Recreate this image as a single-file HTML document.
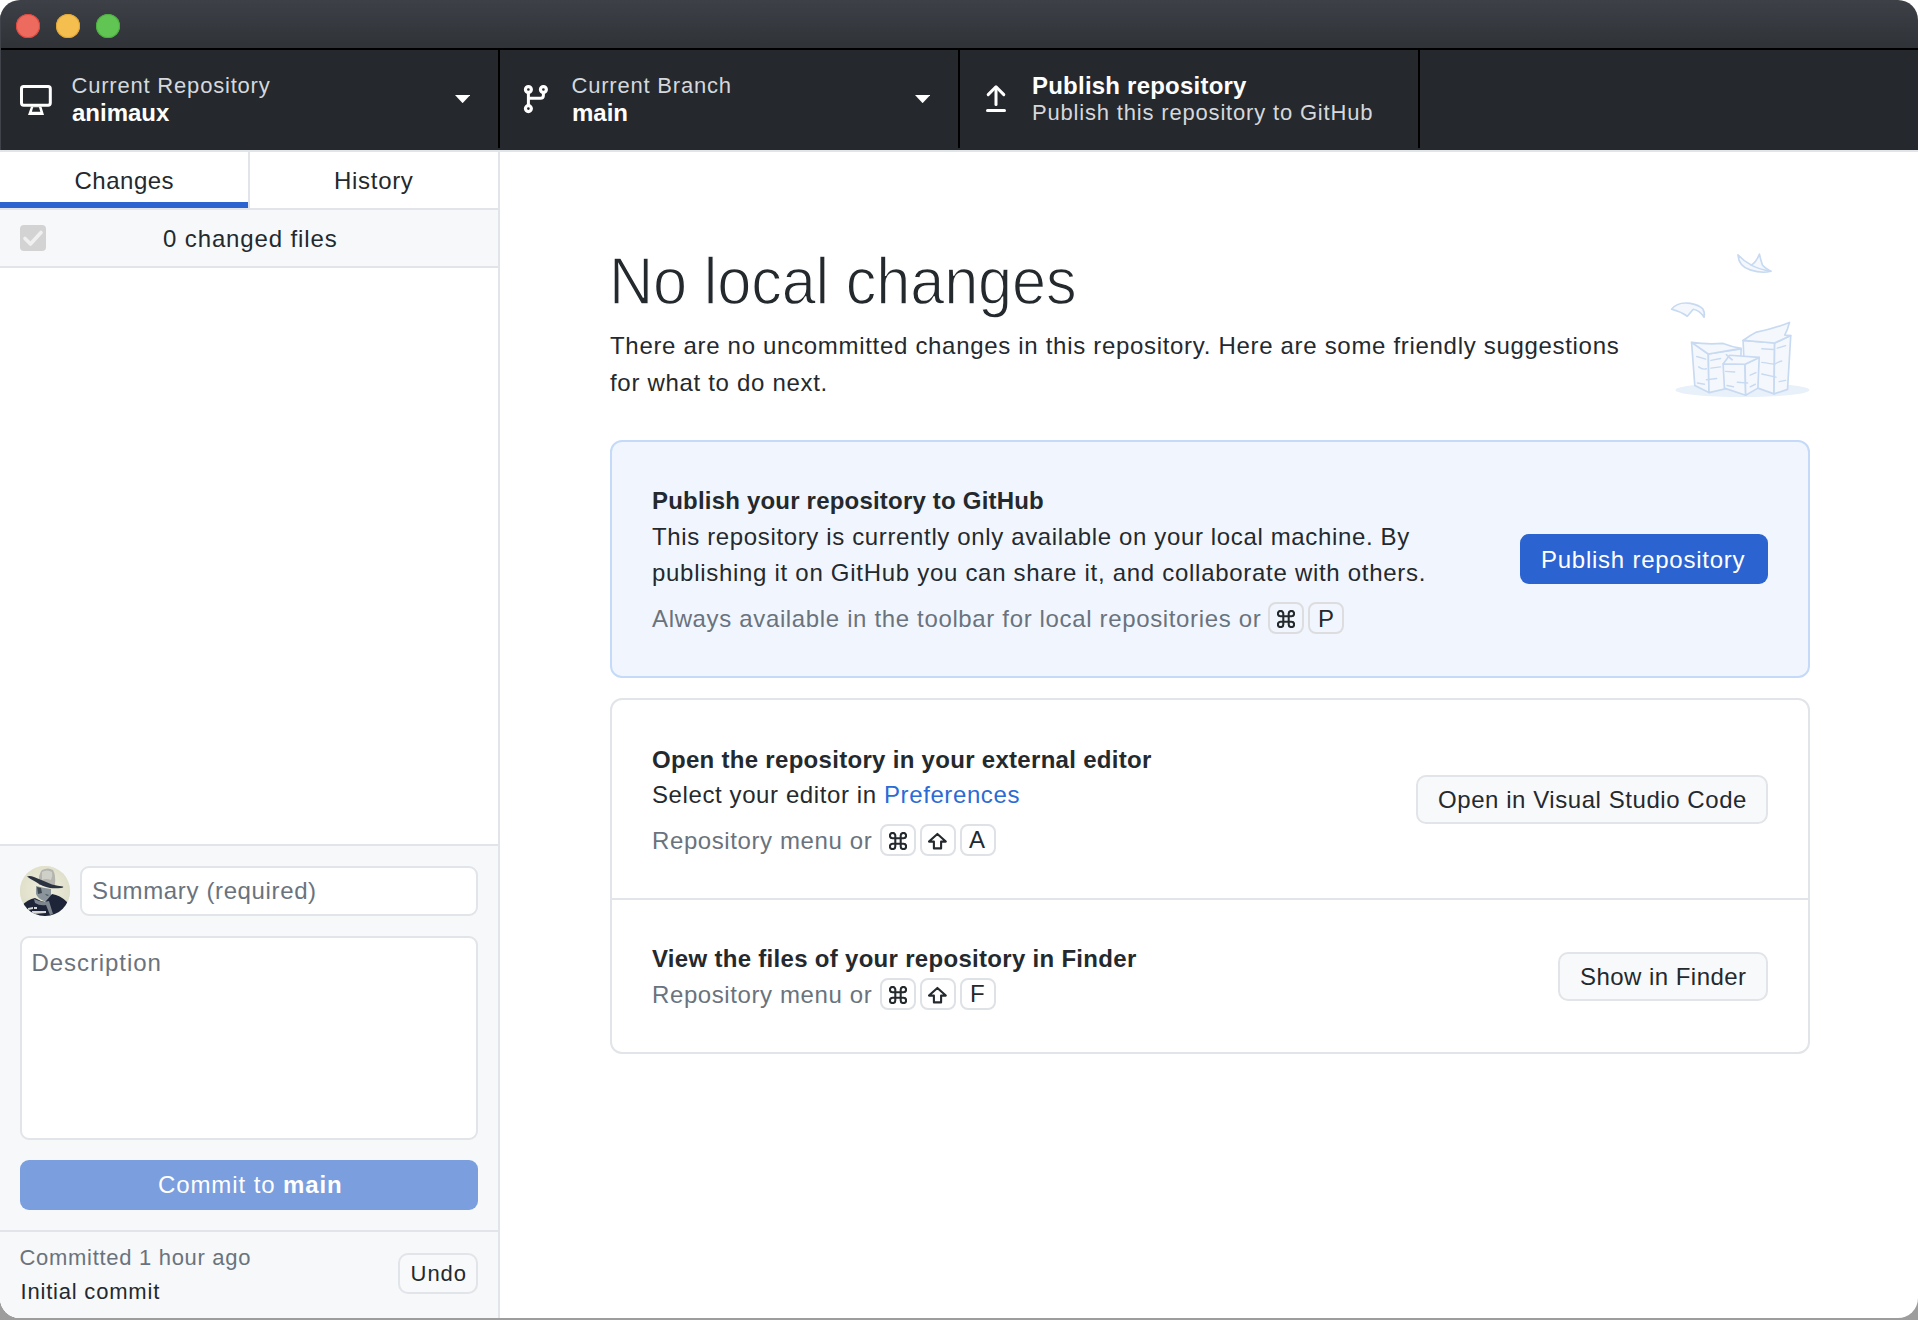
<!DOCTYPE html>
<html>
<head>
<meta charset="utf-8">
<style>
html,body{margin:0;padding:0;}
body{width:1918px;height:1320px;overflow:hidden;position:relative;background:linear-gradient(#fff 0,#fff 1250px,#9d9d9d 1250px);font-family:"Liberation Sans",sans-serif;}
#win{position:absolute;left:0;top:0;width:1918px;height:1318px;border-radius:20px;overflow:hidden;background:#fff;}
.a{position:absolute;}
.t{position:absolute;line-height:1;white-space:nowrap;}
#titlebar{left:0;top:0;width:1918px;height:48px;background:linear-gradient(#3d4046,#2f3237);}
.light{position:absolute;top:14px;width:24px;height:24px;border-radius:50%;}
#blk{left:0;top:48px;width:1918px;height:2px;background:#000;}
#toolbar{left:0;top:50px;width:1918px;height:100px;background:#25282d;}
.vdiv{position:absolute;top:0;width:2px;height:98px;background:#000;}
.lbl{color:#d5d8dc;font-size:22px;letter-spacing:0.7px;}
.val{color:#fff;font-size:24px;font-weight:bold;}
.hline{position:absolute;height:2px;background:#e1e4e8;}
#sidebar{left:0;top:152px;width:498px;height:1166px;background:#fff;}
.gray{color:#6a737d;}
.dark{color:#24292e;}
.f24{font-size:24px;letter-spacing:0.6px;}
.card{position:absolute;box-sizing:border-box;border-radius:12px;}
.btn{position:absolute;box-sizing:border-box;border:2px solid #e1e4e8;background:#f8f9fa;border-radius:10px;}
.kbd{position:absolute;box-sizing:border-box;width:36px;height:32px;border:2px solid #dee1e5;border-radius:8px;}
</style>
</head>
<body>
<div id="win">
  <div id="titlebar" class="a">
    <div class="light" style="left:16px;background:#ed6a5e;box-shadow:inset 0 0 0 1px #e0473d;"></div>
    <div class="light" style="left:56px;background:#f4bf4f;box-shadow:inset 0 0 0 1px #e0a535;"></div>
    <div class="light" style="left:96px;background:#61c554;box-shadow:inset 0 0 0 1px #4cae3e;"></div>
  </div>
  <div id="blk" class="a"></div>
  <div id="toolbar" class="a">
    <!-- section 1 -->
    <svg class="a" style="left:20px;top:35px" width="33" height="32" viewBox="0 0 33 32">
      <rect x="1.5" y="1.5" width="28.8" height="18.8" rx="2.2" fill="none" stroke="#fff" stroke-width="3"/>
      <path fill="#fff" fill-rule="evenodd" d="M11 21.5 L21.4 21.5 L24 30 L8 30 Z M13.2 22.3 L19 22.3 L20.3 26.8 L11.9 26.8 Z"/>
    </svg>
    <div class="t lbl" style="left:71.5px;top:25px;letter-spacing:0.8px;">Current Repository</div>
    <div class="t val" style="left:72px;top:50.5px;">animaux</div>
    <svg class="a" style="left:454.5px;top:44.6px" width="15.2" height="8.2" viewBox="0 0 16 9" preserveAspectRatio="none"><path d="M0 0 L16 0 L8 9 Z" fill="#fff"/></svg>
    <div class="vdiv" style="left:498px"></div>
    <!-- section 2 -->
    <svg class="a" style="left:522px;top:34px" width="28" height="32" viewBox="0 0 28 32">
      <g fill="none" stroke="#fff" stroke-width="3">
        <circle cx="6.4" cy="5.5" r="2.95" stroke-width="3.2"/>
        <circle cx="21.4" cy="5.5" r="2.95" stroke-width="3.2"/>
        <circle cx="6.4" cy="24.6" r="2.95" stroke-width="3.2"/>
        <path d="M6.4 8.5 V21.6"/>
        <path d="M21.4 8.5 V11.2 Q21.4 14.2 18.4 14.2 H6.4"/>
      </g>
    </svg>
    <div class="t lbl" style="left:571.5px;top:25px;letter-spacing:0.8px;">Current Branch</div>
    <div class="t val" style="left:572px;top:50.5px;">main</div>
    <svg class="a" style="left:914.5px;top:44.6px" width="15.2" height="8.2" viewBox="0 0 16 9" preserveAspectRatio="none"><path d="M0 0 L16 0 L8 9 Z" fill="#fff"/></svg>
    <div class="vdiv" style="left:958px"></div>
    <!-- section 3 -->
    <svg class="a" style="left:984px;top:34px" width="24" height="30" viewBox="0 0 24 30">
      <g fill="none" stroke="#fff" stroke-width="3" stroke-linecap="round" stroke-linejoin="round">
        <path d="M12 3.5 V20.5"/>
        <path d="M4.2 10.6 L12 2.8 L19.8 10.6"/>
        <path d="M3.5 26.5 H20.5"/>
      </g>
    </svg>
    <div class="t val" style="left:1032px;top:24.4px;letter-spacing:0.22px;">Publish repository</div>
    <div class="t lbl" style="left:1032px;top:51.9px;letter-spacing:0.82px;">Publish this repository to GitHub</div>
    <div class="vdiv" style="left:1418px"></div>
  </div>
  <div class="hline" style="left:0;top:150px;width:1918px;"></div>
  <div class="a" style="left:0;top:14px;width:1px;height:136px;background:#40434a;"></div>

  <!-- SIDEBAR -->
  <div id="sidebar" class="a">
    <!-- tabs (y 152-208) -->
    <div class="t dark f24" style="left:74.5px;top:16.7px;letter-spacing:0.5px;">Changes</div>
    <div class="t dark f24" style="left:334px;top:16.7px;letter-spacing:0.7px;">History</div>
    <div class="a" style="left:248px;top:0;width:2px;height:56px;background:#e1e4e8;"></div>
    <div class="a" style="left:0;top:50px;width:248px;height:6px;background:#2b64d0;"></div>
    <div class="hline" style="left:0;top:56px;width:498px;"></div>
    <!-- changed files row (210-266) -->
    <div class="a" style="left:0;top:58px;width:498px;height:56px;background:#f6f8fa;"></div>
    <svg class="a" style="left:20px;top:73px" width="26" height="26" viewBox="0 0 26 26">
      <rect x="0" y="0" width="26" height="26" rx="4" fill="#d3d3d3"/>
      <path d="M5 13.5 L10.5 19 L21 7.5" fill="none" stroke="#f0f0f0" stroke-width="3.6" stroke-linecap="round" stroke-linejoin="round"/>
    </svg>
    <div class="t dark f24" style="left:163px;top:75px;letter-spacing:0.88px;">0 changed files</div>
    <div class="hline" style="left:0;top:114px;width:498px;"></div>
    <!-- commit area (846-1230) -->
    <div class="hline" style="left:0;top:692px;width:498px;"></div>
    <div class="a" style="left:0;top:694px;width:498px;height:624px;background:#f6f8fa;"></div>
    <div class="a" style="left:20px;top:714px;width:49.5px;height:50px;border-radius:50%;overflow:hidden;background:#e6e4cd;">
      <svg width="50" height="50" viewBox="0 0 50 50">
        <defs><radialGradient id="bgav" cx="0.5" cy="0.45" r="0.6"><stop offset="0" stop-color="#efeedd"/><stop offset="1" stop-color="#dcdcc6"/></radialGradient></defs>
        <rect width="50" height="50" fill="url(#bgav)"/>
        <path d="M19 19 Q18 8 22 4 Q28 1 33 4 Q36 9 35 19 Z" fill="#b3b5ae"/>
        <path d="M22 6 Q27 3 32 6 Q33 10 31 14 Q26 12 22 14 Z" fill="#cfd0c8"/>
        <path d="M7 10.5 Q10 9.5 14 11 Q24 15 32 18.5 Q38 20 43 20.5 Q44 21.5 41 22 Q35 22.5 30 22 Q22 20.5 16 16 Q10 13 7 10.5 Z" fill="#2b3240"/>
        <path d="M16 20 Q23 22 31 23 L31 30 Q29 36 24 35 Q18 33 16 28 Z" fill="#8a949b"/>
        <path d="M17 21 L21 22 L22 27 L18 28 Z M25 28 Q27 31 29 29" fill="#3e4650"/>
        <path d="M0 41 Q8 33 15 32 Q20 35 25 36 Q28 33 32 28 Q40 29 47 36 L50 50 L0 50 Z" fill="#1f2538"/>
        <path d="M14 33 Q22 37 29 35 L33 48 L30 49 L26 39 Q20 40 15 37 Z" fill="#7d868e"/>
        <path d="M8 42 L13 41 L13 43 L8 44 Z M14 41 L17 41 L17 43 L14 43 Z M12 45 L26 45 L26 47 L12 48 Z" fill="#d8d8d8"/>
      </svg>
    </div>
    <div class="a" style="left:80px;top:714px;width:398px;height:50px;box-sizing:border-box;border:2px solid #e1e4e8;border-radius:9px;background:#fff;"></div>
    <div class="t gray f24" style="left:92px;top:727.3px;letter-spacing:0.63px;">Summary (required)</div>
    <div class="a" style="left:20px;top:784px;width:458px;height:204px;box-sizing:border-box;border:2px solid #e1e4e8;border-radius:9px;background:#fff;"></div>
    <div class="t gray f24" style="left:31.5px;top:798.5px;letter-spacing:0.93px;">Description</div>
    <div class="a" style="left:20px;top:1008px;width:458px;height:50px;border-radius:9px;background:#7b9ede;"></div>
    <div class="t f24" style="left:158px;top:1021.3px;color:#fff;letter-spacing:0.9px;">Commit to <b style="letter-spacing:0.9px">main</b></div>
    <div class="hline" style="left:0;top:1078px;width:498px;"></div>
    <div class="t gray" style="left:19.5px;top:1095.2px;font-size:22px;letter-spacing:0.7px;">Committed 1 hour ago</div>
    <div class="t dark" style="left:20.5px;top:1129.1px;font-size:22px;letter-spacing:0.8px;">Initial commit</div>
    <div class="btn" style="left:398px;top:1100.5px;width:80px;height:41px;background:#f8f9fa;border-radius:10px;"></div>
    <div class="t dark" style="left:410.5px;top:1111px;font-size:22px;letter-spacing:1px;">Undo</div>
  </div>
  <div class="a" style="left:498px;top:152px;width:2px;height:1166px;background:#e1e4e8;"></div>

  <!-- MAIN -->
  <div id="main" class="a" style="left:0;top:0;width:1918px;height:1318px;pointer-events:none;">
    <div class="t dark" style="left:609px;top:247px;font-size:67px;letter-spacing:-0.2px;transform:scaleX(0.915);transform-origin:0 0;-webkit-text-stroke:1.4px #fff;">No local changes</div>
    <div class="t dark f24" style="left:610px;top:334.3px;letter-spacing:0.69px;">There are no uncommitted changes in this repository. Here are some friendly suggestions</div>
    <div class="t dark f24" style="left:610px;top:371.2px;letter-spacing:0.69px;">for what to do next.</div>

    <svg class="a" style="left:1660px;top:240px" width="160" height="170" viewBox="0 0 1242 1320">
      <ellipse cx="640" cy="1165" rx="520" ry="55" fill="#e8f0fa"/>
      <g fill="#f4f8fd" stroke="#c8daf1" stroke-width="13" stroke-linejoin="round" stroke-linecap="round">
        <path d="M605 115 Q612 205 700 232 Q790 262 860 243 Q810 215 795 195 Q780 150 772 110 Q745 175 708 195 Q650 165 605 115 Z"/>
        <path d="M708 195 Q760 225 860 243"/>
        <path d="M90 538 Q135 478 235 492 Q305 505 332 535 Q350 565 342 600 Q305 545 258 538 L212 592 Q160 555 90 538 Z"/>
        <path d="M645 780 L890 800 L885 1195 L760 1150 L660 1140 Z"/>
        <path d="M890 800 L1015 742 L990 1160 L885 1195 Z"/>
        <path d="M645 780 Q700 740 750 715 Q880 690 1005 640 Q990 700 968 738 L1015 742 L890 800 Z"/>
        <path d="M245 795 L375 885 L380 1185 L270 1130 Z"/>
        <path d="M375 885 L630 845 L620 1130 L380 1185 Z"/>
        <path d="M245 795 Q360 812 490 803 Q560 830 630 842 L375 885 Z"/>
        <path d="M490 962 L660 965 L665 1205 L500 1150 Z"/>
        <path d="M660 965 L770 912 L760 1150 L665 1205 Z"/>
        <path d="M490 962 L540 895 L770 912 L660 965 Z"/>
        <path d="M515 890 Q540 915 560 930" fill="none"/>
      </g>
      <g fill="none" stroke="#c8daf1" stroke-width="11" stroke-linecap="round">
        <path d="M285 905 L355 925 M395 935 L470 920 M300 985 Q330 1010 360 1000 M395 995 L470 985 M360 1085 L440 1075 M290 1110 L345 1120 M510 1020 L580 1025 M600 1105 L680 1110 M700 1050 L745 1030 M700 1140 L740 1120 M520 1130 L570 1140 M790 845 L880 850 M910 840 L975 820 M790 950 Q860 960 890 965 Q920 945 945 940 M790 1040 L900 1065 M925 1100 L975 1090"/>
      </g>
    </svg>

    <!-- card 1 -->
    <div class="card" style="left:610px;top:440px;width:1200px;height:238px;background:#f1f6fe;border:2px solid #c5daf8;"></div>
    <div class="t dark f24" style="left:652px;top:488.7px;font-weight:bold;letter-spacing:0.2px;">Publish your repository to GitHub</div>
    <div class="t dark f24" style="left:652px;top:524.5px;letter-spacing:0.64px;">This repository is currently only available on your local machine. By</div>
    <div class="t dark f24" style="left:652px;top:560.5px;letter-spacing:0.71px;">publishing it on GitHub you can share it, and collaborate with others.</div>
    <div class="t gray f24" style="left:652px;top:606.5px;letter-spacing:0.65px;">Always available in the toolbar for local repositories or</div>
    <div class="kbd" style="left:1268px;top:602px;border-color:#dddddf;"></div><svg class="a" style="left:1276.6px;top:609.8px" width="18" height="18" viewBox="2 2 20 20"><path d="M9 9 V6 A3 3 0 1 0 6 9 H18 A3 3 0 1 0 15 6 V18 A3 3 0 1 0 18 15 H6 A3 3 0 1 0 9 18 Z" fill="none" stroke="#24292e" stroke-width="2.3"/></svg>
    <div class="kbd" style="left:1308px;top:602px;border-color:#dddddf;"></div>
    <div class="t dark f24" style="left:1318px;top:606.5px;">P</div>
    <div class="a" style="left:1520px;top:534px;width:248px;height:50px;border-radius:9px;background:#2b64d0;"></div>
    <div class="t f24" style="left:1541px;top:548.3px;color:#fff;letter-spacing:0.75px;">Publish repository</div>

    <!-- card 2 -->
    <div class="card" style="left:610px;top:698px;width:1200px;height:356px;background:#fff;border:2px solid #e1e4e8;"></div>
    <div class="hline" style="left:612px;top:898px;width:1196px;"></div>
    <div class="t dark f24" style="left:652px;top:747.7px;font-weight:bold;letter-spacing:0.3px;">Open the repository in your external editor</div>
    <div class="t dark f24" style="left:652px;top:782.9px;">Select your editor in <span style="color:#2a6bd5">Preferences</span></div>
    <div class="t gray f24" style="left:652px;top:829.2px;">Repository menu or</div>
    <div class="kbd" style="left:880px;top:824px;"></div><svg class="a" style="left:888.5px;top:831.8px" width="18" height="18" viewBox="2 2 20 20"><path d="M9 9 V6 A3 3 0 1 0 6 9 H18 A3 3 0 1 0 15 6 V18 A3 3 0 1 0 18 15 H6 A3 3 0 1 0 9 18 Z" fill="none" stroke="#24292e" stroke-width="2.3"/></svg>
    <div class="kbd" style="left:920px;top:824px;"></div><svg class="a" style="left:927px;top:831.5px" width="21" height="18" viewBox="0 0 21 18"><path d="M10.4 1.9 L18.8 9.6 H14.1 V16.4 H6.9 V9.6 H2 Z" fill="none" stroke="#24292e" stroke-width="2.1" stroke-linejoin="round"/></svg>
    <div class="kbd" style="left:960px;top:824px;"></div>
    <div class="t dark f24" style="left:969px;top:828.4px;">A</div>
    <div class="btn" style="left:1416px;top:775px;width:352px;height:49px;"></div>
    <div class="t dark f24" style="left:1438px;top:787.9px;letter-spacing:0.56px;">Open in Visual Studio Code</div>

    <div class="t dark f24" style="left:652px;top:947.2px;font-weight:bold;letter-spacing:0.3px;">View the files of your repository in Finder</div>
    <div class="t gray f24" style="left:652px;top:983.2px;">Repository menu or</div>
    <div class="kbd" style="left:880px;top:978px;"></div><svg class="a" style="left:888.5px;top:985.8px" width="18" height="18" viewBox="2 2 20 20"><path d="M9 9 V6 A3 3 0 1 0 6 9 H18 A3 3 0 1 0 15 6 V18 A3 3 0 1 0 18 15 H6 A3 3 0 1 0 9 18 Z" fill="none" stroke="#24292e" stroke-width="2.3"/></svg>
    <div class="kbd" style="left:920px;top:978px;"></div><svg class="a" style="left:927px;top:985.5px" width="21" height="18" viewBox="0 0 21 18"><path d="M10.4 1.9 L18.8 9.6 H14.1 V16.4 H6.9 V9.6 H2 Z" fill="none" stroke="#24292e" stroke-width="2.1" stroke-linejoin="round"/></svg>
    <div class="kbd" style="left:960px;top:978px;"></div>
    <div class="t dark f24" style="left:970px;top:982.4px;">F</div>
    <div class="btn" style="left:1558px;top:952px;width:210px;height:49px;"></div>
    <div class="t dark f24" style="left:1580px;top:964.7px;letter-spacing:0.46px;">Show in Finder</div>
  </div>
</div>
</body>
</html>
